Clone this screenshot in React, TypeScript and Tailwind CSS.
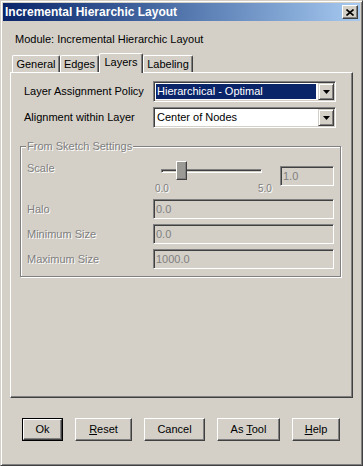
const raised =
  "border border-t-white border-l-white border-r-[#404040] border-b-[#404040] shadow-[inset_-1px_-1px_0_#808080]";
const sunken =
  "border border-t-[#808080] border-l-[#808080] border-r-white border-b-white shadow-[inset_1px_1px_0_#404040,inset_-1px_-1px_0_#d4d0c8]";
const dim = "text-[#808080] [text-shadow:1px_1px_0_#fff]";

function Arrow() {
  return (
    <svg width="7" height="4" viewBox="0 0 7 4">
      <path d="M0 0h7L3.5 4z" fill="#000" />
    </svg>
  );
}

function Select({ value, active }: { value: string; active?: boolean }) {
  return (
    <div className={`flex h-[21px] w-[183px] bg-white ${sunken}`}>
      <div className="flex flex-1 p-[2px]">
        <div
          className={`flex flex-1 items-center pl-[1px] ${
            active ? "bg-[#0a246a] text-white" : "text-black"
          }`}
        >
          {value}
        </div>
      </div>
      <div className="my-[1px] mr-[1px] flex w-[16px] items-center justify-center bg-[#d4d0c8] border border-t-[#d4d0c8] border-l-[#d4d0c8] border-r-[#404040] border-b-[#404040] shadow-[inset_1px_1px_0_#fff,inset_-1px_-1px_0_#808080]">
        <Arrow />
      </div>
    </div>
  );
}

function Field({ value, w }: { value: string; w: string }) {
  return (
    <div className={`flex h-[20px] items-center pl-[2px] text-[#808080] bg-[#d4d0c8] ${w} ${sunken}`}>
      {value}
    </div>
  );
}

function Tab({ label, w, active }: { label: string; w: string; active?: boolean }) {
  return (
    <div
      className={`flex items-center justify-center rounded-t-[2px] bg-[#d4d0c8] border-t border-l border-r border-t-white border-l-white border-r-[#404040] shadow-[inset_-1px_0_0_#808080] ${w} ${
        active ? "relative z-10 -mb-[1px] h-[20px] pb-[2px]" : "h-[17px]"
      }`}
    >
      {label}
    </div>
  );
}

function Button({ children, w, def }: { children: React.ReactNode; w: string; def?: boolean }) {
  return (
    <div className={`h-[23px] ${w} ${def ? "border border-black" : ""}`}>
      <div className={`flex h-full items-center justify-center bg-[#d4d0c8] ${raised}`}>{children}</div>
    </div>
  );
}

export default function App() {
  return (
    <div className="flex h-[466px] w-[363px] flex-col bg-[#d4d0c8] p-[2px] text-[11px] leading-[13px] text-black [font-family:'Liberation_Sans',Arial,sans-serif] border border-t-[#d4d0c8] border-l-[#d4d0c8] border-r-[#404040] border-b-[#404040] shadow-[inset_1px_1px_0_#fff,inset_-1px_-1px_0_#808080]">
      <div className="flex h-[18px] items-center justify-between bg-linear-to-r from-[#0a246a] to-[#a6caf0] pl-[2px] pr-[2px]">
        <span className="text-[12px] font-bold text-white">Incremental Hierarchic Layout</span>
        <div className={`flex h-[14px] w-[16px] items-center justify-center bg-[#d4d0c8] ${raised}`}>
          <svg width="8" height="7" viewBox="0 0 8 7">
            <path d="M0.5 0.5l7 6M7.5 0.5l-7 6" stroke="#000" strokeWidth="1.6" />
          </svg>
        </div>
      </div>

      <div className="ml-[12px] mt-[12px]">Module: Incremental Hierarchic Layout</div>

      <div className="ml-[7px] mt-[7px] flex flex-col">
        <div className="ml-[2px] flex h-[19px] items-end">
          <Tab label="General" w="w-[48px]" />
          <Tab label="Edges" w="w-[39px]" />
          <Tab label="Layers" w="w-[44px]" active />
          <Tab label="Labeling" w="w-[50px]" />
        </div>

        <div className="h-[326px] w-[343px] border border-t-white border-l-white border-r-[#404040] border-b-[#404040] shadow-[inset_-1px_-1px_0_#808080] pt-[8px]">
          <div className="flex items-center">
            <span className="w-[142px] pl-[13px]">Layer Assignment Policy</span>
            <Select value="Hierarchical - Optimal" active />
          </div>
          <div className="mt-[5px] flex items-center">
            <span className="w-[142px] pl-[13px]">Alignment within Layer</span>
            <Select value="Center of Nodes" />
          </div>

          <div className="relative ml-[9px] mt-[18px] h-[131px] w-[321px] border border-[#808080] shadow-[inset_1px_1px_0_#fff,1px_1px_0_#fff] pt-[14px] pl-[6px]">
            <span className={`absolute -top-[7px] left-[5px] bg-[#d4d0c8] px-[1px] ${dim}`}>From Sketch Settings</span>

            <div className="flex">
              <span className={`mt-[1px] w-[126px] ${dim}`}>Scale</span>
              <div className="relative h-[33px] w-[127px]">
                <div className="absolute left-[8px] top-[8px] h-[4px] w-[101px] border-t border-l border-t-[#808080] border-l-[#808080] border-b border-r border-b-white border-r-white shadow-[inset_1px_1px_0_#404040]" />
                <div className="absolute left-[23px] top-0 h-[19px] w-[11px] bg-[#9c9a94] border border-t-white border-l-white border-r-[#404040] border-b-[#404040] shadow-[inset_-1px_-1px_0_#808080]" />
                <span className={`absolute left-[2px] top-[21px] text-[10px] ${dim}`}>0.0</span>
                <span className={`absolute left-[105px] top-[21px] text-[10px] ${dim}`}>5.0</span>
              </div>
              <div className="mt-[5px]">
                <Field value="1.0" w="w-[54px]" />
              </div>
            </div>

            <div className="mt-[5px] flex items-center">
              <span className={`w-[126px] ${dim}`}>Halo</span>
              <Field value="0.0" w="w-[181px]" />
            </div>
            <div className="mt-[5px] flex items-center">
              <span className={`w-[126px] ${dim}`}>Minimum Size</span>
              <Field value="0.0" w="w-[181px]" />
            </div>
            <div className="mt-[5px] flex items-center">
              <span className={`w-[126px] ${dim}`}>Maximum Size</span>
              <Field value="1000.0" w="w-[181px]" />
            </div>
          </div>
        </div>
      </div>

      <div className="ml-[19px] mt-[20px] flex gap-[12px]">
        <Button w="w-[41px]" def>Ok</Button>
        <Button w="w-[57px]">
          <span><span className="underline">R</span>eset</span>
        </Button>
        <Button w="w-[61px]">Cancel</Button>
        <Button w="w-[63px]">
          <span>As <span className="underline">T</span>ool</span>
        </Button>
        <Button w="w-[48px]">
          <span><span className="underline">H</span>elp</span>
        </Button>
      </div>
    </div>
  );
}
